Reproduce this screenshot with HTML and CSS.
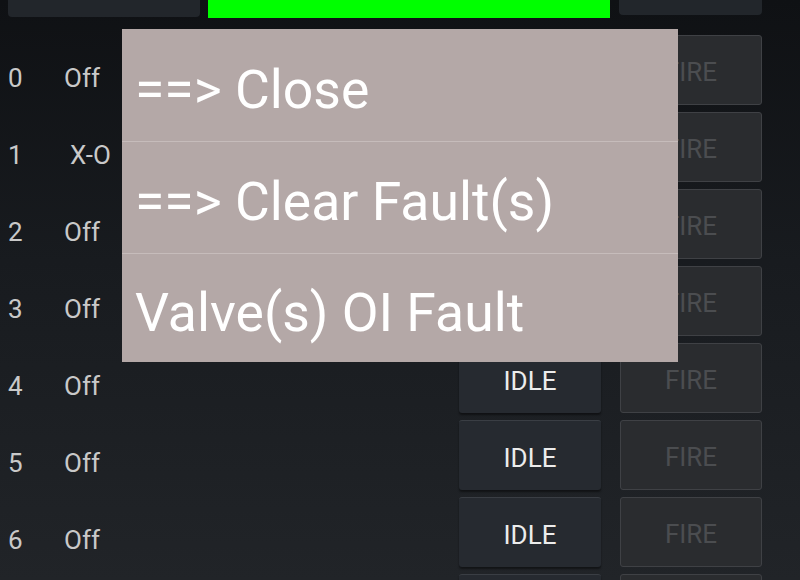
FILE: index.html
```html
<!DOCTYPE html>
<html>
<head>
<meta charset="utf-8">
<link rel="stylesheet" href="styles.css">
</head>
<body>
<div class="screen">
  <div class="topbar">
    <div class="top-btn left"></div>
    <div class="level"></div>
    <div class="top-btn right"></div>
  </div>
  <div class="rows">
    <div class="row"><span class="num">0</span><span class="status">Off</span><span class="spacer"></span><button class="btn idle">IDLE</button><button class="btn fire">FIRE</button></div>
    <div class="row"><span class="num">1</span><span class="status xo">X-O</span><span class="spacer"></span><button class="btn idle">IDLE</button><button class="btn fire">FIRE</button></div>
    <div class="row"><span class="num">2</span><span class="status">Off</span><span class="spacer"></span><button class="btn idle">IDLE</button><button class="btn fire">FIRE</button></div>
    <div class="row"><span class="num">3</span><span class="status">Off</span><span class="spacer"></span><button class="btn idle">IDLE</button><button class="btn fire">FIRE</button></div>
    <div class="row"><span class="num">4</span><span class="status">Off</span><span class="spacer"></span><button class="btn idle">IDLE</button><button class="btn fire">FIRE</button></div>
    <div class="row"><span class="num">5</span><span class="status">Off</span><span class="spacer"></span><button class="btn idle">IDLE</button><button class="btn fire">FIRE</button></div>
    <div class="row"><span class="num">6</span><span class="status">Off</span><span class="spacer"></span><button class="btn idle">IDLE</button><button class="btn fire">FIRE</button></div>
    <div class="row"><span class="num">7</span><span class="status">Off</span><span class="spacer"></span><button class="btn idle">IDLE</button><button class="btn fire">FIRE</button></div>
  </div>
  <div class="menu">
    <div class="menu-item">==&gt; Close</div>
    <div class="menu-item">==&gt; Clear Fault(s)</div>
    <div class="menu-item">Valve(s) OI Fault</div>
  </div>
</div>
</body>
</html>
```
FILE: styles.css
```css
html, body {
  margin: 0;
  padding: 0;
}
body {
  width: 800px;
  height: 580px;
  overflow: hidden;
  font-family: Roboto, "Noto Sans", sans-serif;
}
.screen {
  position: relative;
  width: 800px;
  height: 580px;
  overflow: hidden;
  background: linear-gradient(to bottom, #0f1114 0%, #181b1f 45%, #212428 100%);
}
.topbar {
  display: flex;
  align-items: flex-start;
  padding-left: 8px;
  height: 18px;
}
.top-btn {
  background: #22262b;
  border-radius: 0 0 4px 4px;
}
.top-btn.left {
  width: 192px;
  height: 17px;
}
.level {
  width: 402px;
  height: 18px;
  margin-left: 8px;
  background: #00ff00;
}
.top-btn.right {
  width: 143px;
  height: 15px;
  margin-left: 9px;
}
.rows {
  display: flex;
  flex-direction: column;
  gap: 7px;
  margin-top: 17px;
}
.row {
  display: flex;
  align-items: center;
  height: 70px;
  padding-right: 38px;
  color: #c9c9c9;
  font-size: 26px;
}
.num {
  width: 56px;
  padding: 16px 0 0 8px;
}
.status {
  width: 60px;
  padding-top: 16px;
}
.status.xo {
  padding-left: 6px;
  width: 54px;
}
.spacer {
  flex: 1;
}
.btn {
  width: 142px;
  height: 70px;
  font-family: Roboto, "Noto Sans", sans-serif;
  font-size: 26px;
  border-radius: 3px;
  padding: 4px 0 0 0;
  margin: 0;
}
.idle {
  background: #262a30;
  color: #ececec;
  border: none;
  border-top: 1px solid #3a3e44;
  box-shadow: 0 2px 2px rgba(0, 0, 0, 0.45);
}
.fire {
  margin-left: 19px;
  background: #2a2c2f;
  color: #4b4d50;
  border: 1px solid #3f4145;
}
.menu {
  position: absolute;
  left: 122px;
  top: 29px;
  width: 556px;
  height: 333px;
  background: #b4a8a7;
  display: flex;
  flex-direction: column;
}
.menu-item {
  box-sizing: border-box;
  height: 112px;
  flex: none;
  display: flex;
  align-items: center;
  padding: 8px 0 0 13px;
  color: #ffffff;
  font-size: 53.5px;
  white-space: nowrap;
}
.menu-item:last-child {
  flex: 1;
  height: auto;
}
.menu-item + .menu-item {
  border-top: 1px solid #c6bcbb;
}
```
